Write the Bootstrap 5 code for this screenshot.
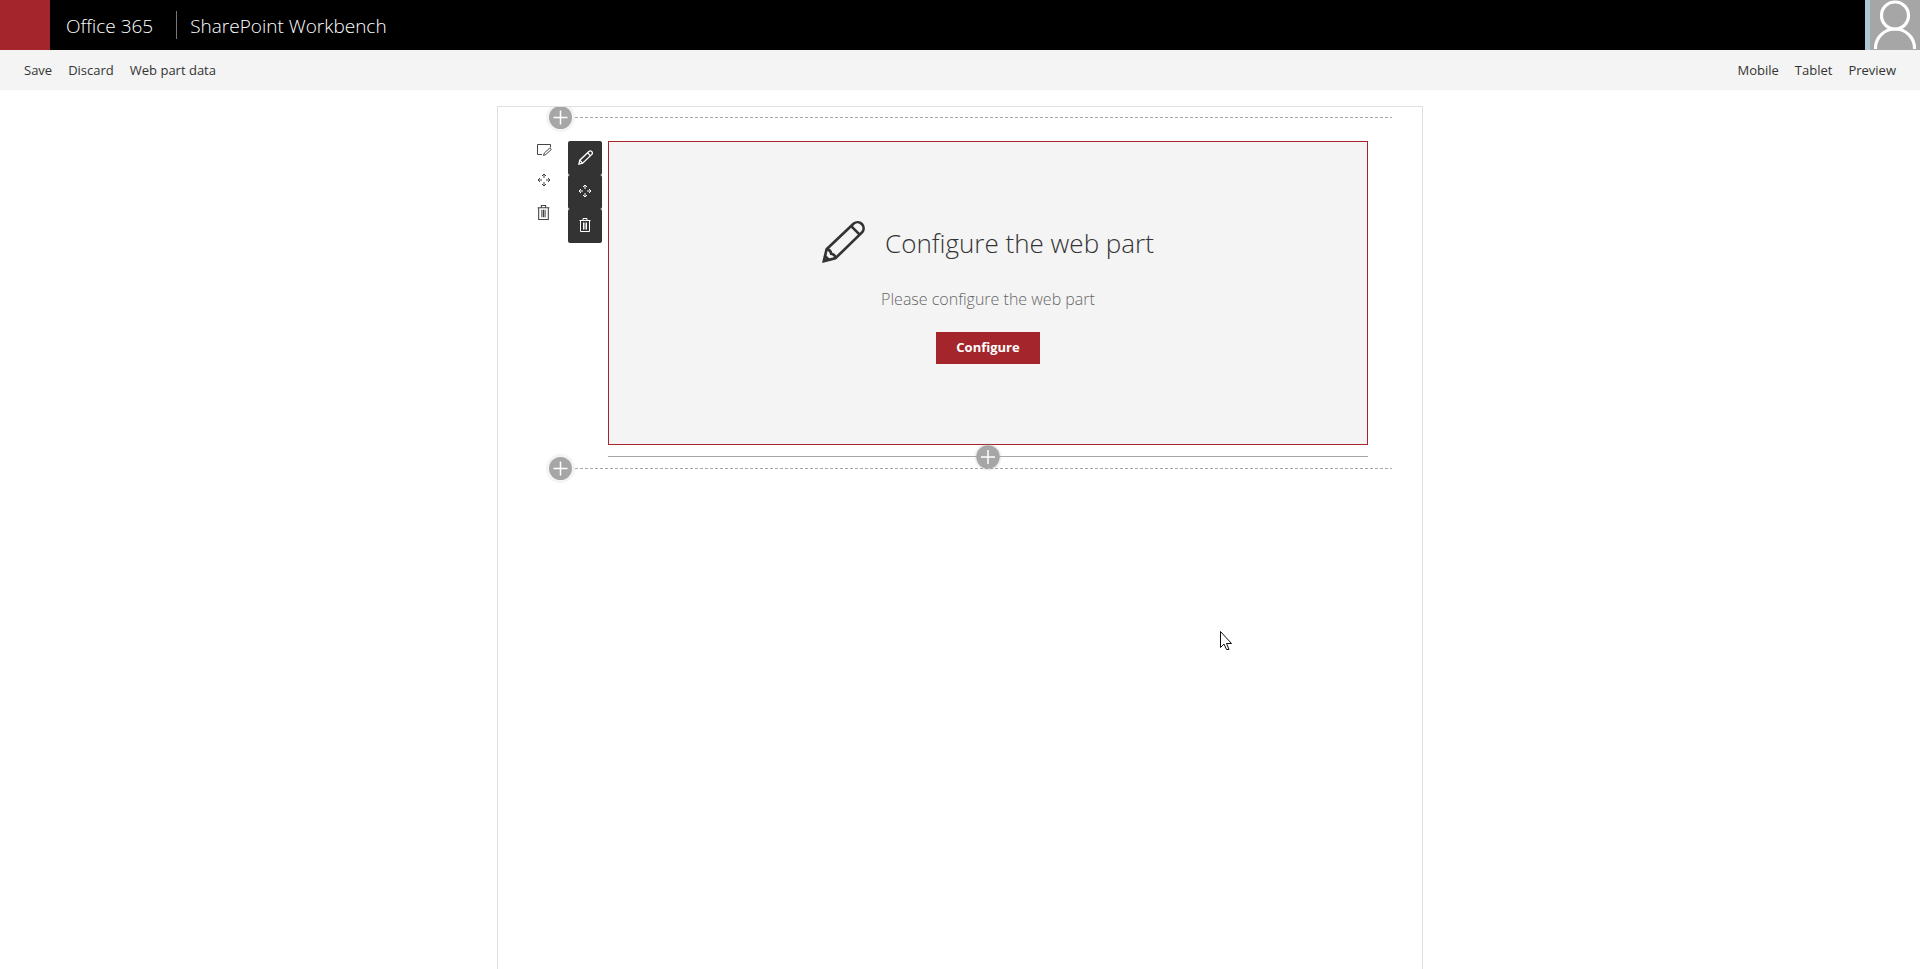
<!DOCTYPE html>
<html lang="en">
<head>
<meta charset="utf-8">
<meta name="viewport" content="width=device-width, initial-scale=1">
<title>SharePoint Workbench</title>
<link href="https://cdn.jsdelivr.net/npm/bootstrap@5.3.0/dist/css/bootstrap.min.css" rel="stylesheet">
<style>
  body { font-family: "Open Sans", "Noto Sans", sans-serif; color: #333; }
  svg { display: block; }
  .suite-bar { height: 50px; background: #000; color: #fff; }
  .suite-bar a { color: #fff; font-weight: 300; font-size: 19px; line-height: 50px; padding-top: 2px; }
  .launcher { --bs-btn-bg: #a4262c; --bs-btn-hover-bg: #a4262c; width: 50px; height: 50px; }
  .divider { width: 1px; height: 28px; background: #767676; margin: 0 13px 0 23px; }
  .persona { width: 55px; height: 50px; background: #a6a6a6; border-left: 5px solid #abc8d4; }
  .command-bar { height: 40px; background: #f4f4f4; }
  .command-bar button { font-size: 13px; line-height: 20px; color: #333; }
  .canvas { max-width: 926px; min-height: calc(100vh - 106px); border: 1px solid #e1e1e1; border-bottom: 0; }
  .zone-add { height: 21px; padding: 0 30px 0 51px; gap: 3px; }
  .add-btn { width: 23px; height: 23px; border-radius: 50%; background: #a6a6a6; box-shadow: 0 0 0 3px #f4f4f4; }
  .add-btn.plain { box-shadow: 0 0 3px #a6a6a6; }
  .dashes { height: 1px; background: repeating-linear-gradient(90deg, #a6a6a6 0 3px, transparent 3px 5px); }
  .zone { padding: 13px 54px 0 37px; }
  .section-tools { width: 17px; margin-right: 16px; }
  .section-tools button { height: 32px; padding-top: 0; }
  .part-tools { width: 34px; margin-right: 6px; }
  .part-tools button { width: 34px; height: 34px; background: #333; color: #fff; border-radius: 2px; padding: 0 0 2px; }
  .web-part { height: 304px; background: #f4f4f4; border: 1px solid #a4262c; padding-top: 71px; }
  .web-part h1 { font-weight: 300; font-size: 26px; line-height: 60px; }
  .web-part p { font-weight: 300; font-size: 16px; line-height: 24px; color: #666; margin: 14px 0 21px; }
  .configure { min-width: 104px; height: 32px; background: #a4262c; color: #fff; font-weight: 700; font-size: 13px; }
  .part-add { height: 23px; }
  .part-add hr { border-color: #a6a6a6; opacity: 1; }
  .zone-end { height: 23px; margin-top: -11px; }
  .pointer { left: 722px; top: 524px; }
</style>
</head>
<body class="bg-white overflow-hidden">
<header class="suite-bar d-flex align-items-center">
  <button class="launcher btn border-0 rounded-0 p-0" aria-label="App launcher"></button>
  <a href="#" class="text-decoration-none ms-3">Office 365</a>
  <span class="divider"></span>
  <a href="#" class="text-decoration-none">SharePoint Workbench</a>
  <button class="persona btn rounded-0 border-top-0 border-end-0 border-bottom-0 p-0 ms-auto" aria-label="Account">
    <svg width="50" height="50" fill="none" stroke="#fff" stroke-width="3.2"><circle cx="25" cy="15.500" r="13.500"/><path d="M5.500 49V48a19.500 19 0 0 1 39 0v1"/></svg>
  </button>
</header>
<nav class="command-bar d-flex justify-content-between align-items-center px-4">
  <div class="d-flex gap-3">
    <button class="btn border-0 p-0">Save</button>
    <button class="btn border-0 p-0">Discard</button>
    <button class="btn border-0 p-0">Web part data</button>
  </div>
  <div class="d-flex gap-3">
    <button class="btn border-0 p-0">Mobile</button>
    <button class="btn border-0 p-0">Tablet</button>
    <button class="btn border-0 p-0">Preview</button>
  </div>
</nav>

<svg class="d-none">
  <symbol id="pencil" viewBox="0 0 42 42"><g fill="none" stroke="currentColor" stroke-width="2.6"><path d="M1.800 40.200 4.500 28.500 31 3.500a5.900 5.900 0 0 1 8.300 8.300L13 37.500z"/><path d="M4.500 28.500c3 .5 4 1.500 4.500 4.500 3 .5 4 1.500 4 4.500M28.500 6l8.300 8.300M2.500 35l4.500 4"/></g></symbol>
  <symbol id="move" viewBox="0 0 14 14"><g fill="none" stroke="currentColor"><path d="M7 1v4M7 9v4M1 7h4M9 7h4M5 3l2-2 2 2M5 11l2 2 2-2M3 5 1 7l2 2M11 5l2 2-2 2"/></g></symbol>
  <symbol id="trash" viewBox="0 0 12 14"><g fill="none" stroke="currentColor"><path d="M.5 2.500h11M4 2.500v-2h4v2M1.500 2.500v11h9v-11M4.500 4.500v7M6 4.500v7M7.500 4.500v7"/></g></symbol>
  <symbol id="plus" viewBox="0 0 23 23"><path d="M11.500 4.500v14M4.500 11.500h14" stroke="#fff" stroke-width="1.500"/></symbol>
</svg>

<main class="canvas position-relative overflow-hidden mx-auto mt-3">
  <div class="zone-add d-flex align-items-center">
    <button class="add-btn btn border-0 p-0 flex-shrink-0" aria-label="Add a section"><svg width="23" height="23"><use href="#plus"/></svg></button>
    <span class="dashes flex-grow-1"></span>
  </div>
  <div class="zone d-flex align-items-start">
    <div class="section-tools d-flex flex-column flex-shrink-0">
      <button class="btn border-0 px-0 d-flex align-items-start justify-content-center" aria-label="Edit section">
        <svg width="16" height="17" fill="none" stroke="#444"><path d="M6 13.500H1.500v-10h13v3"/><path d="m7.500 14.500.8-2.500 5.500-5 1.500 1.500-5.500 5z"/></svg>
      </button>
      <button class="btn border-0 px-0 d-flex align-items-start justify-content-center" aria-label="Move section"><svg width="14" height="14"><use href="#move" color="#444"/></svg></button>
      <button class="btn border-0 px-0 d-flex align-items-start justify-content-center" aria-label="Delete section"><svg width="13" height="15"><use href="#trash" color="#444"/></svg></button>
    </div>
    <div class="part-tools d-flex flex-column flex-shrink-0">
      <button class="btn border-0 d-flex align-items-center justify-content-center" aria-label="Edit web part"><svg width="15" height="15" viewBox="0 0 42 42"><g fill="none" stroke="#fff" stroke-width="3.600"><path d="M2.500 39.500 5 28.500 30.500 4a5.900 5.900 0 0 1 8.300 8.300L13 37z"/><path d="m5 28.500 8 8.500M27 8l8 8"/></g></svg></button>
      <button class="btn border-0 d-flex align-items-center justify-content-center" aria-label="Move web part"><svg width="14" height="14"><use href="#move"/></svg></button>
      <button class="btn border-0 d-flex align-items-center justify-content-center" aria-label="Delete web part"><svg width="12" height="14"><use href="#trash"/></svg></button>
    </div>
    <div class="flex-grow-1">
      <section class="web-part text-center">
        <div class="d-flex justify-content-center align-items-center">
          <svg class="me-3 mb-1" width="43" height="43"><use href="#pencil"/></svg>
          <h1 class="mb-0 ms-1">Configure the web part</h1>
        </div>
        <p>Please configure the web part</p>
        <button class="configure btn border-0 rounded-0 p-0">Configure</button>
      </section>
      <div class="part-add position-relative d-flex align-items-center">
        <hr class="w-100 m-0">
        <button class="add-btn plain btn border-0 p-0 position-absolute start-50 top-50 translate-middle" aria-label="Add a web part"><svg width="23" height="23"><use href="#plus"/></svg></button>
      </div>
    </div>
  </div>
  <div class="zone-add zone-end d-flex align-items-center">
    <button class="add-btn btn border-0 p-0 flex-shrink-0" aria-label="Add a section below"><svg width="23" height="23"><use href="#plus"/></svg></button>
    <span class="dashes flex-grow-1"></span>
  </div>
  <svg class="pointer position-absolute" width="13" height="20" fill="#fff" stroke="#111"><path d="M.5.500v16l3.500-3.500 2.500 5.500h2.500l-2.500-6h5z"/></svg>
</main>
<script src="https://cdn.jsdelivr.net/npm/bootstrap@5.3.0/dist/js/bootstrap.bundle.min.js"></script>
</body>
</html>
